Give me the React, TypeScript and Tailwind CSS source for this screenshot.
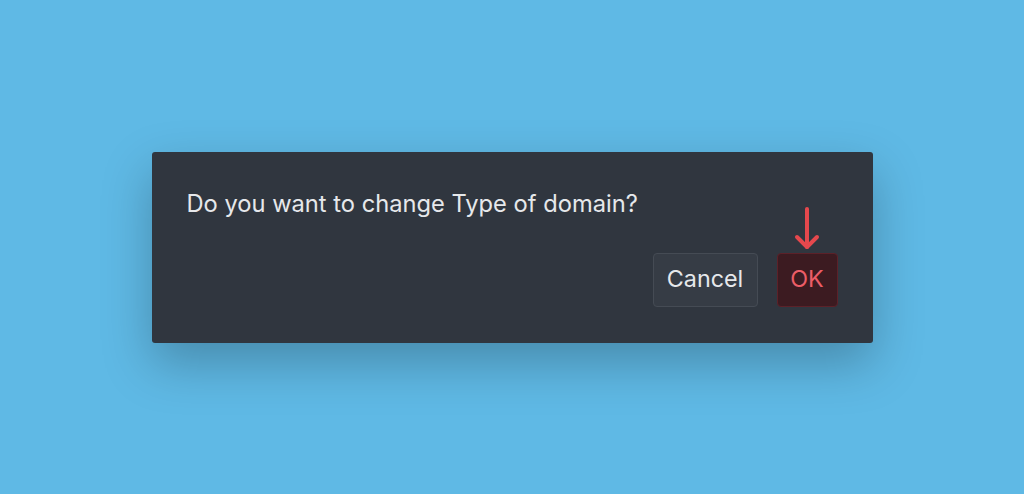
const App = () => {
  return (
    <div className="flex h-[494px] w-full items-center justify-center bg-[#5fb9e5] font-['Inter',sans-serif]">
      <div className="flex h-[191px] w-[721px] flex-col rounded-[3px] bg-[#30363f] px-[35px] pb-[36px] pt-[38px] shadow-[0_20px_50px_rgba(0,0,0,0.25)]">
        <p className="text-[23.7px] leading-[28px] text-[#e6e8eb]">
          Do you want to change Type of domain?
        </p>
        <div className="mt-auto flex items-end justify-end gap-[19px]">
          <button className="h-[54px] w-[105px] rounded-[4px] border border-[#454b54] bg-[#363c45] text-[23.3px] text-[#e6e8eb]">
            Cancel
          </button>
          <div className="relative">
            <svg
              className="absolute bottom-[56px] left-1/2 -translate-x-1/2"
              width="26"
              height="44"
              viewBox="0 0 26 44"
              fill="none"
              stroke="#e5484d"
              strokeWidth="4"
              strokeLinecap="round"
              strokeLinejoin="round"
            >
              <path d="M13 2 V40" />
              <path d="M3 30 L13 40 L23 30" />
            </svg>
            <button className="h-[54px] w-[61px] rounded-[4px] border border-[#5c2129] bg-[#3c1b21] text-[23.3px] text-[#ec5d67]">
              OK
            </button>
          </div>
        </div>
      </div>
    </div>
  );
};

export default App;
